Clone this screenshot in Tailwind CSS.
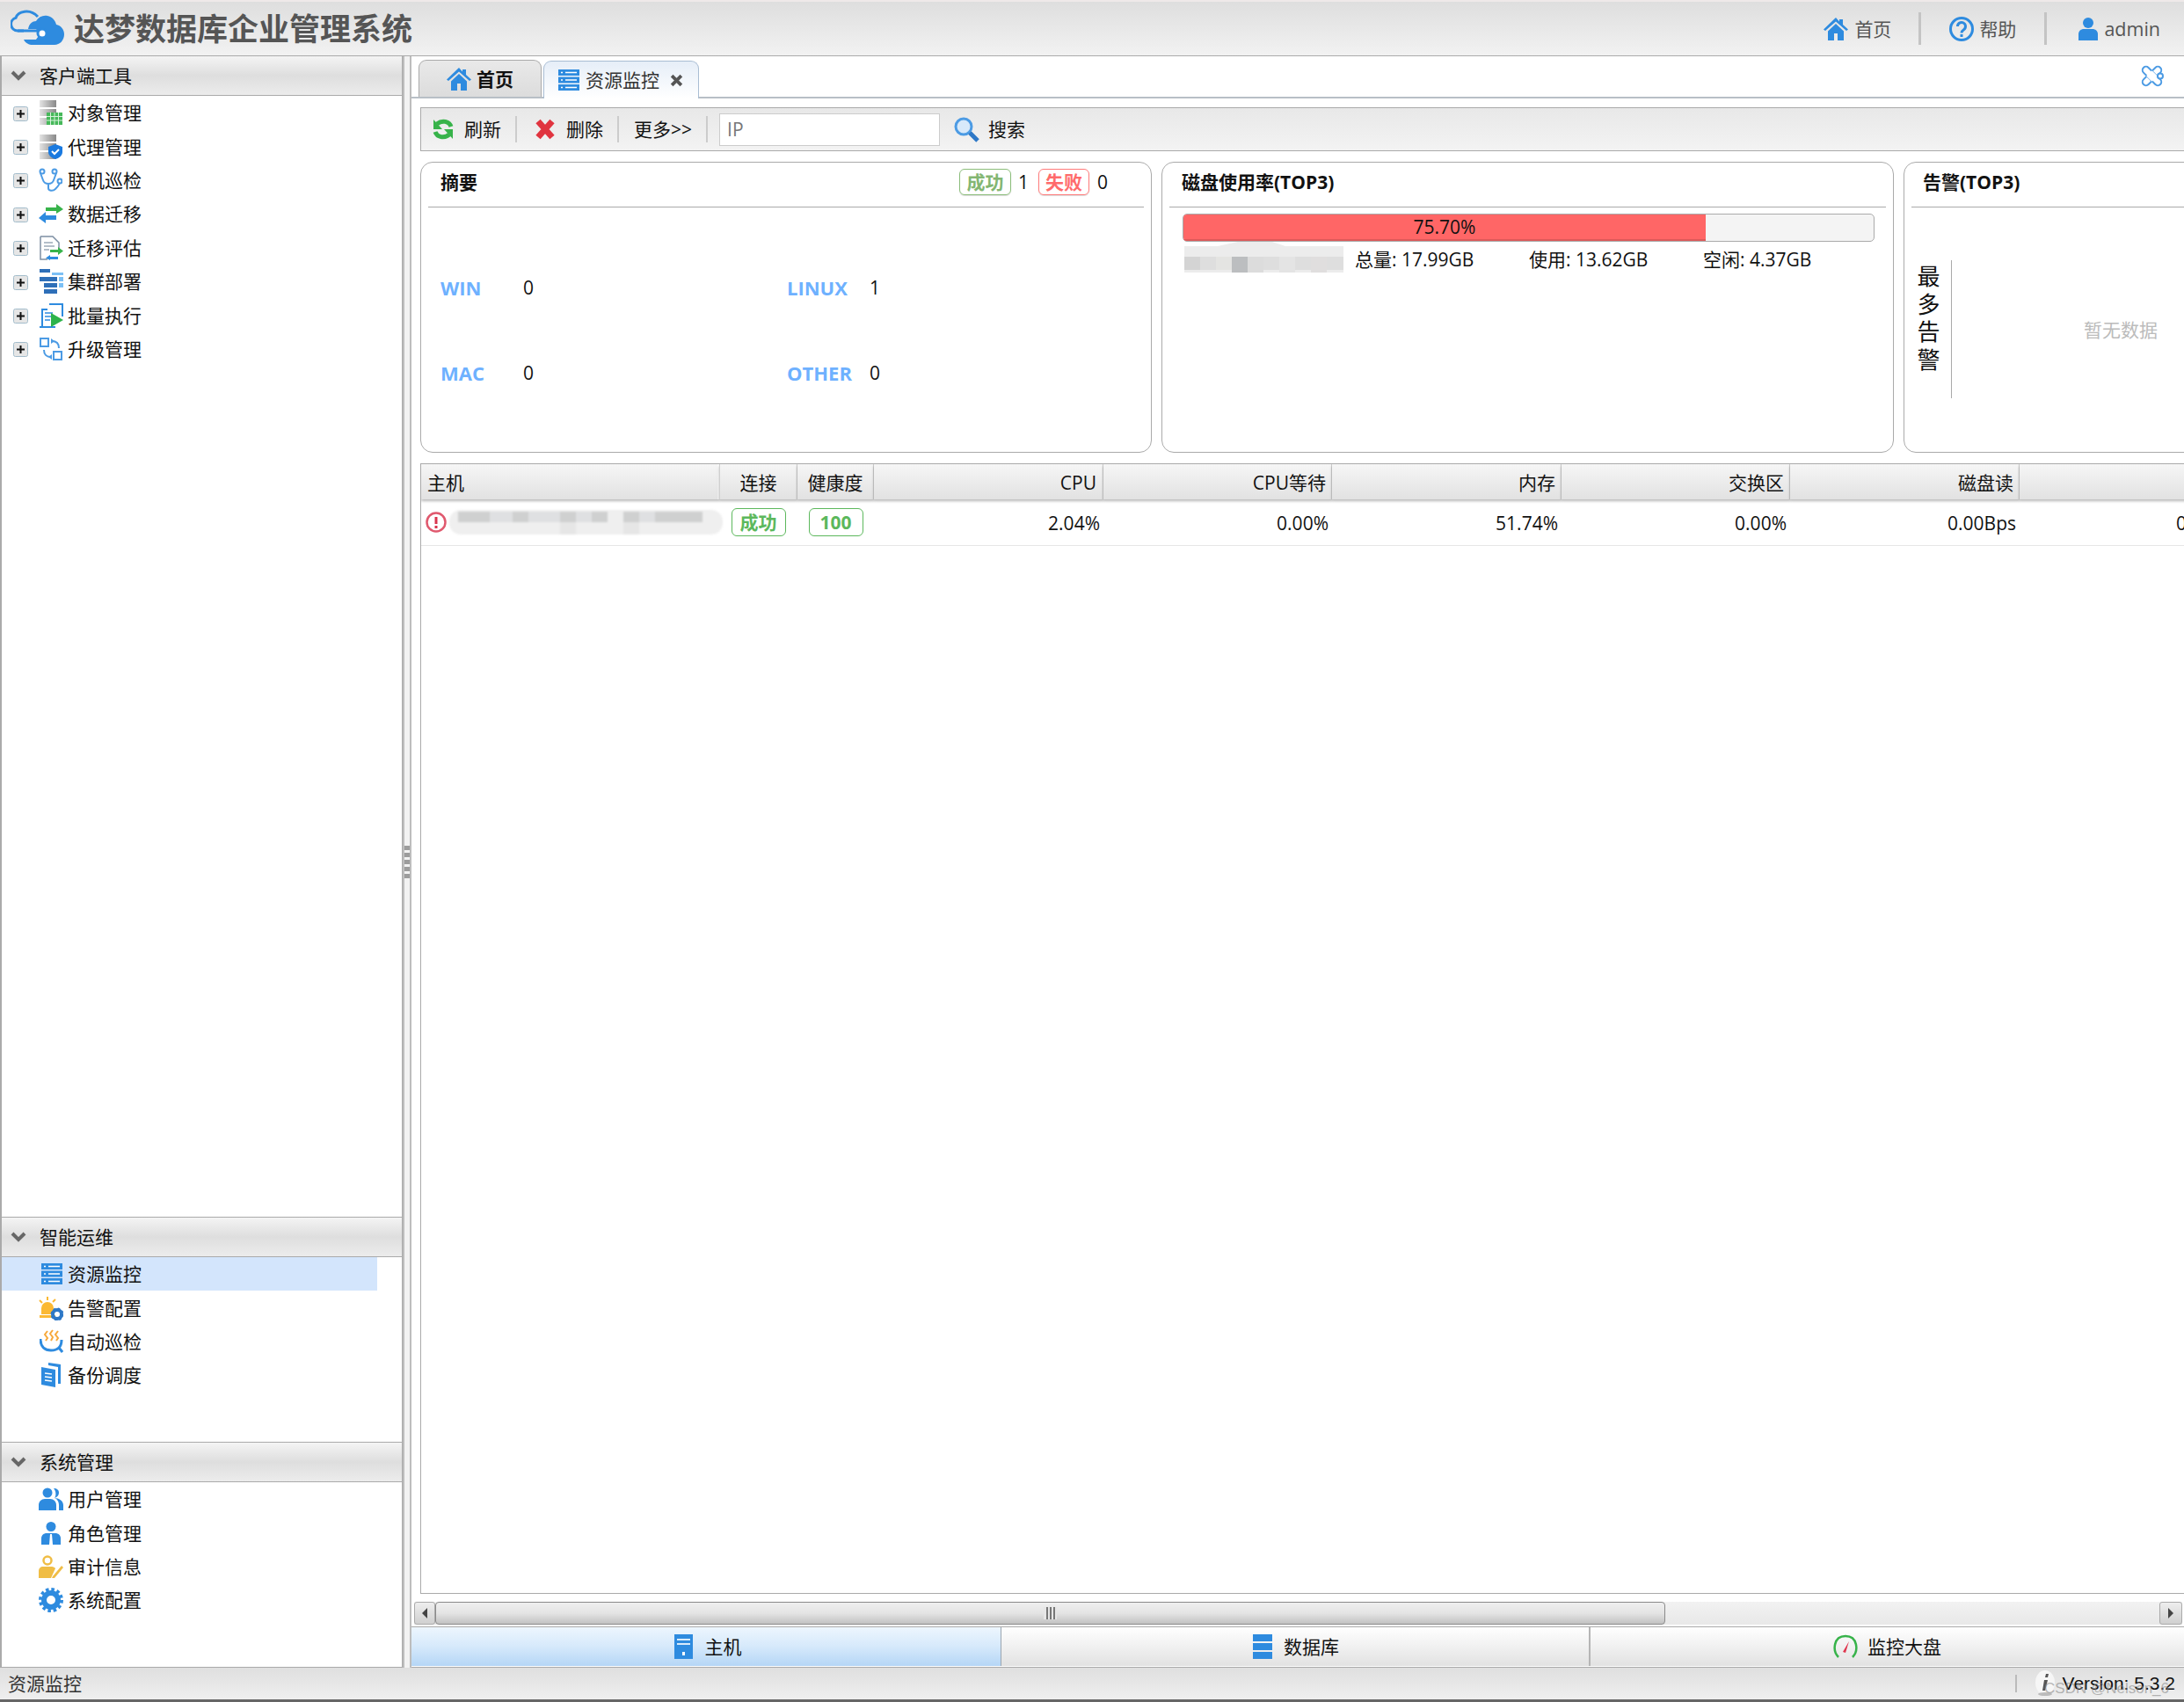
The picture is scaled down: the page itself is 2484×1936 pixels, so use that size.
<!DOCTYPE html>
<html lang="zh-CN">
<head>
    <meta charset="UTF-8">
    <title>达梦数据库企业管理系统</title>
    <script src="https://cdn.jsdelivr.net/npm/@tailwindcss/browser@4"></script>
</head>
<body class="w-[2484px] h-[1936px] overflow-hidden flex flex-col bg-white text-[#111] text-[21px] leading-[28px] font-['Open_Sans','Noto_Sans_CJK_SC',sans-serif]">

    <!-- shared icons -->
    <svg class="absolute w-0 h-0">
        <defs>
            <linearGradient id="stack" x1="0" x2="1" y1="0" y2="0"><stop offset="0" stop-color="#e4e4e4"/><stop offset="1" stop-color="#888"/></linearGradient>
        </defs>
        <symbol id="plus" viewBox="0 0 17 17"><rect x="0.5" y="0.5" width="16" height="16" rx="2" fill="#e6e6e6" stroke="#a3bccb"/><path d="M4 8.500h9M8.500 4v9" stroke="#111" stroke-width="2"/></symbol>
        <symbol id="chevron" viewBox="0 0 18 12"><path d="M2 2l7 7 7-7" fill="none" stroke="#666" stroke-width="4"/></symbol>
        <symbol id="home" viewBox="0 0 28 26"><path d="M14 0L0 13.500l2 1.500L14 4.500 26 15l2-1.500L22 8V2h-4v2.500zM5 15.500V26h7v-8h4v8h7V15.500L14 7z" fill="#2e8bdf"/></symbol>
        <symbol id="rows" viewBox="0 0 24 24"><path d="M0 0h24v7H0zM0 8.500h24v7H0zM0 17h24v7H0z" fill="#2e8bdf"/><path d="M3 3.500h2M8 3.500h13M3 12h2M8 12h13M3 20.500h2M8 20.500h13" stroke="#fff" stroke-width="1.500"/></symbol>
    </svg>

    <!-- Header -->
    <header class="h-[64px] flex-none flex items-center border-b border-[#aaa] border-t-2 border-t-[#efe9e9] bg-linear-to-b from-[#dedede] to-[#f2f2f2] text-[#555]">
        <svg class="ml-[12px] w-[62px] h-[42px] -mt-[2px]" viewBox="12 12 62 42">
            <path d="M27 36h-7a7.500 7.500 0 0 1-2-14.700C20 14 34 10 43 20" fill="none" stroke="#2e8bdf" stroke-width="3"/>
            <path d="M32 34c1-6 5-9 9-9 3-5 8-7 13-6 5 1 9 5 10 10 5 1 9 5 9 11 0 7-5 12-11 12H37c-4 0-8-2-10-6h14a8 8 0 0 0 0-12z" fill="#2e8bdf"/>
            <path d="M20 36h24" stroke="#2e8bdf" stroke-width="3"/>
            <circle cx="48" cy="39" r="5" fill="#fff" stroke="#2e8bdf" stroke-width="3"/>
        </svg>
        <h1 class="ml-[10px] text-[35px] leading-[44px] font-bold tracking-[0px]">达梦数据库企业管理系统</h1>
        <div class="ml-auto flex items-center h-[38px]">
            <svg class="w-[28px] h-[26px]"><use href="#home"/></svg>
            <span class="ml-[7px]">首页</span>
            <div class="w-[3px] h-[37px] bg-[#c4c4c4] ml-[31px]"></div>
            <svg class="w-[28px] h-[28px] ml-[32px]" viewBox="0 0 28 28"><circle cx="14" cy="14" r="12.500" fill="none" stroke="#2e8bdf" stroke-width="3"/><path d="M9.500 11a4.500 4.500 0 1 1 7 3.700c-1.500 1-2.500 1.800-2.500 3.800" fill="none" stroke="#2e8bdf" stroke-width="3"/><rect x="12.500" y="20" width="3" height="3" fill="#2e8bdf"/></svg>
            <span class="ml-[6px]">帮助</span>
            <div class="w-[3px] h-[37px] bg-[#c4c4c4] ml-[32px]"></div>
            <svg class="w-[22px] h-[26px] ml-[36px]" viewBox="0 0 22 26"><circle cx="11" cy="6" r="6" fill="#2e8bdf"/><path d="M0 26v-7c0-4 3-6 6-6h10c3 0 6 2 6 6v7z" fill="#2e8bdf"/></svg>
            <span class="ml-[7px] mr-[27px] text-[21.5px]">admin</span>
        </div>
    </header>

    <div class="flex-1 flex min-h-0">
        <!-- Sidebar -->
        <aside class="w-[458px] flex-none flex flex-col border-l-2 border-r border-b border-[#aaa]">
            <section class="flex-1">
                <div class="h-[45px] flex items-center border-b border-[#aaa] bg-linear-to-b from-[#f4f4f4] via-[#dedede] to-[#ececec]">
                    <svg class="w-[18px] h-[12px] ml-[10px]"><use href="#chevron"/></svg>
                    <span class="ml-[15px]">客户端工具</span>
                </div>
                <div class="h-[38.4px] flex items-center pl-[13px]">
                    <svg class="w-[17px] h-[17px] mt-[2px]"><use href="#plus"/></svg>
                    <svg class="w-[26px] h-[28px] ml-[13px]" viewBox="0 0 26 28"><path d="M0 0h19v8H0zM0 10h19v8H0zM0 20h19v8H0z" fill="url(#stack)"/><rect x="8" y="14" width="18" height="14" fill="#46b85a"/><path d="M8 18.500h18M8 23h18M12.500 14v14M17 14v14M21.500 14v14" stroke="#d6f2da" stroke-width="1"/></svg>
                    <span class="ml-[6px]">对象管理</span>
                </div>
                <div class="h-[38.4px] flex items-center pl-[13px]">
                    <svg class="w-[17px] h-[17px] mt-[2px]"><use href="#plus"/></svg>
                    <svg class="w-[26px] h-[28px] ml-[13px]" viewBox="0 0 26 28"><path d="M0 0h19v8H0zM0 10h19v8H0zM0 20h19v8H0z" fill="url(#stack)"/><path d="M18 11l8 3v6c0 4-4 7-8 8-4-1-8-4-8-8v-6z" fill="#1a7ae0"/><path d="M14 19l3 3 5-5" fill="none" stroke="#fff" stroke-width="2"/></svg>
                    <span class="ml-[6px]">代理管理</span>
                </div>
                <div class="h-[38.4px] flex items-center pl-[13px]">
                    <svg class="w-[17px] h-[17px] mt-[2px]"><use href="#plus"/></svg>
                    <svg class="w-[27px] h-[28px] ml-[12px]" viewBox="0 0 27 28" fill="none" stroke="#4c9be4" stroke-width="2"><circle cx="4" cy="4" r="2.500"/><circle cx="18" cy="4" r="2.500"/><circle cx="24" cy="15" r="2.500"/><path d="M2 6l3 8c1 3 3 4 6 4s5-1 6-4l3-8M11 18v5c0 3 5 4 8 1 2-2 4-4 5-7"/></svg>
                    <span class="ml-[6px]">联机巡检</span>
                </div>
                <div class="h-[38.4px] flex items-center pl-[13px]">
                    <svg class="w-[17px] h-[17px] mt-[2px]"><use href="#plus"/></svg>
                    <svg class="w-[28px] h-[22px] ml-[12px]" viewBox="0 0 28 22"><path d="M8 4h12V0l8 6-8 5V8H8z" fill="#37b34a"/><path d="M20 13H8V9l-8 7 8 6v-4h12z" fill="#2e8bdf"/></svg>
                    <span class="ml-[5px]">数据迁移</span>
                </div>
                <div class="h-[38.4px] flex items-center pl-[13px]">
                    <svg class="w-[17px] h-[17px] mt-[2px]"><use href="#plus"/></svg>
                    <svg class="w-[27px] h-[28px] ml-[13px]" viewBox="0 0 27 28"><path d="M1 1h14l7 7v8M1 1v26h8" fill="none" stroke="#7d8fa3" stroke-width="1.500"/><path d="M5 8h10M5 12h12M5 16h6" stroke="#9aa9b8" stroke-width="1.500"/><path d="M12 16h9v-3l6 4.500-6 4.500v-3h-9z" fill="#37b34a"/><path d="M21 24h-9v-2l-5 3.500 5 2.500v-1h9z" fill="#2e8bdf"/></svg>
                    <span class="ml-[5px]">迁移评估</span>
                </div>
                <div class="h-[38.4px] flex items-center pl-[13px]">
                    <svg class="w-[17px] h-[17px] mt-[2px]"><use href="#plus"/></svg>
                    <svg class="w-[27px] h-[28px] ml-[13px]" viewBox="0 0 27 28"><path d="M0 0h12v4H0zM0 9h20v5H0zM5 16h15v5H5zM5 23h15v5H5z" fill="#2e6fb8"/><path d="M14 4h13v3H14zM22 9h5v5h-5zM22 16h5v5h-5z" fill="#7cc0f5"/></svg>
                    <span class="ml-[5px]">集群部署</span>
                </div>
                <div class="h-[38.4px] flex items-center pl-[13px]">
                    <svg class="w-[17px] h-[17px] mt-[2px]"><use href="#plus"/></svg>
                    <svg class="w-[28px] h-[28px] ml-[12px]" viewBox="0 0 28 28"><path d="M4 27V7h6M12 1h15v14" fill="none" stroke="#2e8bdf" stroke-width="2"/><path d="M1 27h18" stroke="#2e8bdf" stroke-width="2"/><path d="M7 11h9M7 15h7M7 19h6" stroke="#2e8bdf" stroke-width="1.500"/><path d="M14 11l14 8-14 8z" fill="#2db34a"/></svg>
                    <span class="ml-[5px]">批量执行</span>
                </div>
                <div class="h-[38.4px] flex items-center pl-[13px]">
                    <svg class="w-[17px] h-[17px] mt-[2px]"><use href="#plus"/></svg>
                    <svg class="w-[26px] h-[27px] ml-[13px]" viewBox="0 0 26 27" fill="none" stroke="#4c9be4" stroke-width="2"><rect x="1" y="2" width="9" height="9"/><rect x="16" y="17" width="9" height="9"/><path d="M14 5c5 0 8 3 8 8M5 15c0 5 3 8 7 8"/><path d="M17 5l-4-3v6zM10 23l4 3v-6z" fill="#4c9be4" stroke="none"/></svg>
                    <span class="ml-[6px]">升级管理</span>
                </div>
            </section>

            <section class="h-[256px] flex-none">
                <div class="h-[46px] flex items-center border-y border-[#aaa] bg-linear-to-b from-[#f4f4f4] via-[#dedede] to-[#ececec]">
                    <svg class="w-[18px] h-[12px] ml-[10px]"><use href="#chevron"/></svg>
                    <span class="ml-[15px]">智能运维</span>
                </div>
                <div class="h-[38.4px] w-[427px] flex items-center pl-[45px] bg-[#d3e5fc]">
                    <svg class="w-[24px] h-[24px]"><use href="#rows"/></svg>
                    <span class="ml-[6px]">资源监控</span>
                </div>
                <div class="h-[38.4px] flex items-center pl-[42px]">
                    <svg class="w-[28px] h-[28px]" viewBox="0 0 28 28"><path d="M3 21v-7a7 7 0 0 1 14 0v7z" fill="#fbb934"/><path d="M1 22h18v3H1z" fill="#fbb934"/><path d="M1 5l3 3M10 1v4M19 4l-3 3" stroke="#fbb934" stroke-width="2"/><circle cx="21" cy="21" r="5" fill="none" stroke="#2e78c7" stroke-width="4"/><circle cx="21" cy="21" r="6.500" fill="none" stroke="#2e78c7" stroke-width="2" stroke-dasharray="2.500 2.600"/></svg>
                    <span class="ml-[5px]">告警配置</span>
                </div>
                <div class="h-[38.4px] flex items-center pl-[43px]">
                    <svg class="w-[27px] h-[27px]" viewBox="0 0 27 27"><path d="M9 2L6 6l3 4-2 3M15 1l-3 4 3 4-2 4M21 2l-3 4 3 4-2 3" fill="none" stroke="#f7a93b" stroke-width="2"/><path d="M1 11c0 9 5 13 12 13 4 0 7-1 9-3l4 5M25 12c0 3-1 7-3 9" fill="none" stroke="#2e8bdf" stroke-width="3"/></svg>
                    <span class="ml-[5px]">自动巡检</span>
                </div>
                <div class="h-[38.4px] flex items-center pl-[45px]">
                    <svg class="w-[24px] h-[28px]" viewBox="0 0 24 28"><path d="M8 0l14 2v22h-3V5L8 3z" fill="#2e8bdf"/><path d="M0 5l16 3v20L0 25z" fill="#2e8bdf"/><path d="M4 12l8 1M4 16l8 1M4 20l8 1" stroke="#fff" stroke-width="1.500"/></svg>
                    <span class="ml-[6px]">备份调度</span>
                </div>
            </section>

            <section class="h-[256px] flex-none">
                <div class="h-[46px] flex items-center border-y border-[#aaa] bg-linear-to-b from-[#f4f4f4] via-[#dedede] to-[#ececec]">
                    <svg class="w-[18px] h-[12px] ml-[10px]"><use href="#chevron"/></svg>
                    <span class="ml-[15px]">系统管理</span>
                </div>
                <div class="h-[38.4px] flex items-center pl-[42px]">
                    <svg class="w-[28px] h-[26px]" viewBox="0 0 28 26"><circle cx="10" cy="6" r="5.500" fill="#2e8bdf"/><path d="M0 26v-6c0-4 3-7 7-7h6c4 0 7 3 7 7v6z" fill="#2e8bdf"/><path d="M17 1c4 0 6 2 6 5s-2 5-5 6c5 0 10 3 10 8v6h-5v-6c0-4-2-7-5-8 2-2 2-8-1-11z" fill="#2e8bdf"/></svg>
                    <span class="ml-[5px]">用户管理</span>
                </div>
                <div class="h-[38.4px] flex items-center pl-[45px]">
                    <svg class="w-[22px] h-[26px]" viewBox="0 0 22 26"><circle cx="11" cy="5.500" r="5.500" fill="#2e8bdf"/><path d="M0 26v-7c0-4 3-6 6-6h10c3 0 6 2 6 6v7z" fill="#2e8bdf"/><path d="M10 14h2l1 12H9z" fill="#fff"/></svg>
                    <span class="ml-[8px]">角色管理</span>
                </div>
                <div class="h-[38.4px] flex items-center pl-[42px]">
                    <svg class="w-[28px] h-[26px]" viewBox="0 0 28 26"><circle cx="10" cy="6" r="4.500" fill="none" stroke="#f0bd45" stroke-width="2.500"/><path d="M0 26v-8c0-3 2-5 5-5h10c2 0 3 1 4 2l-5 11z" fill="#f0bd45"/><path d="M16 24l10-12 2 2-10 12h-3z" fill="#f0bd45"/></svg>
                    <span class="ml-[5px]">审计信息</span>
                </div>
                <div class="h-[38.4px] flex items-center pl-[42px]">
                    <svg class="w-[28px] h-[28px]" viewBox="0 0 28 28"><circle cx="14" cy="14" r="8" fill="none" stroke="#2e8bdf" stroke-width="6"/><circle cx="14" cy="14" r="12" fill="none" stroke="#2e8bdf" stroke-width="4" stroke-dasharray="3.500 2.780"/></svg>
                    <span class="ml-[5px]">系统配置</span>
                </div>
            </section>
        </aside>

        <!-- Splitter -->
        <div class="w-[10px] flex-none flex flex-col items-center justify-center gap-[3px] border-x-2 border-[#bdbdbd] bg-[#f2f2f2]">
            <div class="w-[6px] h-[5px] bg-[#9c9c9c]"></div>
            <div class="w-[6px] h-[5px] bg-[#9c9c9c]"></div>
            <div class="w-[6px] h-[5px] bg-[#9c9c9c]"></div>
            <div class="w-[6px] h-[5px] bg-[#9c9c9c]"></div>
            <div class="w-[6px] h-[5px] bg-[#9c9c9c]"></div>
        </div>

        <!-- Main -->
        <main class="flex-1 min-w-0 flex flex-col overflow-hidden">
            <!-- Tabs -->
            <div class="h-[48px] flex-none flex items-end pl-[8px] border-b-2 border-[#b8bfc6]">
                <div class="w-[140px] h-[42px] flex items-center pl-[31px] rounded-t-[9px] border border-b-0 border-[#aaa] bg-linear-to-b from-[#e9e9e9] to-[#dcdcdc]">
                    <svg class="w-[28px] h-[26px]"><use href="#home"/></svg>
                    <span class="ml-[6px] font-bold">首页</span>
                </div>
                <div class="w-[177px] h-[43px] -mb-[2px] ml-[2px] flex items-center pl-[16px] rounded-t-[9px] border border-b-0 border-[#a9bdd3] bg-linear-to-b from-[#e6eef8] to-white">
                    <svg class="w-[24px] h-[24px]"><use href="#rows"/></svg>
                    <span class="ml-[7px] text-[#333]">资源监控</span>
                    <svg class="w-[15px] h-[15px] ml-[12px]" viewBox="0 0 14 14"><path d="M2 2l10 10M12 2L2 12" stroke="#555" stroke-width="3.500"/></svg>
                </div>
                <svg class="w-[27px] h-[27px] ml-auto mr-[23px] mb-[10px]" viewBox="0 0 27 27" fill="#fff" stroke="#4c9be4" stroke-width="2"><rect x="9.500" y="0" width="8" height="27" rx="4" transform="rotate(45 13.500 13.500)"/><rect x="9.500" y="0" width="8" height="27" rx="4" transform="rotate(-45 13.500 13.500)"/><rect x="9" y="9" width="9" height="9" stroke="none" transform="rotate(45 13.500 13.500)"/><circle cx="23" cy="13.500" r="3"/></svg>
            </div>

            <!-- Toolbar -->
            <div class="h-[50px] flex-none mt-[10px] ml-[10px] flex items-center border border-r-0 border-[#aaa] bg-linear-to-b from-[#e8e8e8] to-[#f3f3f3]">
                <svg class="w-[24px] h-[26px] ml-[13px]" viewBox="0 0 24 26" fill="none" stroke="#37b34a" stroke-width="5"><path d="M21 10C19 4 11 2 5 7"/><path d="M3 16c2 6 10 8 16 3"/><path d="M1 2v11h10zM23 24V13H13z" fill="#37b34a" stroke="none"/></svg>
                <span class="ml-[12px]">刷新</span>
                <div class="w-[2px] h-[30px] bg-[#ccc] ml-[16px]"></div>
                <svg class="w-[22px] h-[24px] ml-[21px]" viewBox="0 0 22 24"><path d="M3 3l16 18M19 3L3 21" stroke="#e0343f" stroke-width="7"/></svg>
                <span class="ml-[13px]">删除</span>
                <div class="w-[2px] h-[30px] bg-[#ccc] ml-[16px]"></div>
                <span class="ml-[17px]">更多&gt;&gt;</span>
                <div class="w-[2px] h-[30px] bg-[#ccc] ml-[16px]"></div>
                <div class="w-[251px] h-[37px] ml-[13px] flex items-center pl-[8px] border border-[#ccc] bg-white text-[#777]">IP</div>
                <svg class="w-[29px] h-[29px] ml-[16px]" viewBox="0 0 29 29"><circle cx="11" cy="11" r="9" fill="#d7e9fa" stroke="#4c9be4" stroke-width="3"/><path d="M18 18l9 9" stroke="#2e78c7" stroke-width="5"/></svg>
                <span class="ml-[10px]">搜索</span>
            </div>

            <!-- Summary cards -->
            <div class="h-[331px] flex-none mt-[12px] ml-[10px] flex gap-[11px]">
                <div class="w-[832px] flex-none rounded-[14px] border border-[#aaa]">
                    <div class="h-[50px] flex items-center pl-[22px] pr-[49px] pb-[6px] font-bold">
                        <span>摘要</span>
                        <span class="ml-auto h-[30px] w-[59px] flex items-center justify-center rounded-[6px] border border-[#8bbd7a] text-[#83b672] shadow-[0_1px_1px_rgba(0,0,0,.15)]">成功</span>
                        <span class="ml-[8px] w-[23px] font-normal">1</span>
                        <span class="h-[30px] w-[58px] flex items-center justify-center rounded-[6px] border border-[#ff7a7a] text-[#ff6b6b] shadow-[0_1px_1px_rgba(0,0,0,.15)]">失败</span>
                        <span class="ml-[9px] w-[12px] font-normal">0</span>
                    </div>
                    <div class="mx-[8px] h-px bg-[#aaa]"></div>
                    <div class="mt-[71px] pl-[22px] grid grid-cols-[94px_300px_94px_auto] gap-y-[57px] h-[28px] leading-[40px]">
                        <span class="font-bold text-[22px] text-[#6eb1ff]">WIN</span><span>0</span>
                        <span class="font-bold text-[22px] text-[#6eb1ff]">LINUX</span><span>1</span>
                        <span class="font-bold text-[22px] text-[#6eb1ff]">MAC</span><span>0</span>
                        <span class="font-bold text-[22px] text-[#6eb1ff]">OTHER</span><span>0</span>
                    </div>
                </div>
                <div class="w-[833px] flex-none rounded-[14px] border border-[#aaa]">
                    <div class="h-[50px] flex items-center pl-[22px] pb-[6px] font-bold">磁盘使用率(TOP3)</div>
                    <div class="mx-[8px] h-px bg-[#aaa]"></div>
                    <div class="relative mt-[7px] ml-[23px] w-[787px] h-[32px] rounded-[5px] border border-[#aaa] bg-[#f4f4f4] overflow-hidden">
                        <div class="w-[594px] h-full bg-[#ff6666] border-b-2 border-[#dd5a5a] flex items-center justify-center">75.70%</div>
                    </div>
                    <div class="flex items-center h-[37px] -mt-[2px] ml-[25px]">
                        <svg class="w-[181px] h-[37px] flex-none" viewBox="0 0 181 37">
                            <path d="M0 7h38L70 0h24l21 7h66v30H0z" fill="#ececec"/>
                            <path d="M0 19h181v15H0z" fill="#dedede"/>
                            <path d="M0 19h18v15H0z" fill="#d4d4d4"/><path d="M54 19h18v18H54z" fill="#bcbec0"/><path d="M36 19h18v15H36z" fill="#e4e4e2"/><path d="M72 19h18v18H72z" fill="#dcdcdc"/><path d="M108 19h18v18h-18z" fill="#e4e4e4"/><path d="M144 19h18v18h-18z" fill="#e0dede"/>
                        </svg>
                        <span class="ml-[13px] mt-[6px] w-[198px] flex-none">总量: 17.99GB</span>
                        <span class="mt-[6px] w-[198px] flex-none">使用: 13.62GB</span>
                        <span class="mt-[6px] flex-none">空闲: 4.37GB</span>
                    </div>
                </div>
                <div class="w-[833px] flex-none rounded-l-[14px] border border-[#aaa]">
                    <div class="h-[50px] flex items-center pl-[21px] pb-[6px] font-bold">告警(TOP3)</div>
                    <div class="ml-[8px] h-px bg-[#aaa]"></div>
                    <div class="flex mt-[60px]">
                        <div class="ml-[14px] w-[27px] pt-[3px] flex flex-col items-center text-[26px] leading-[31.5px]">
                            <span>最</span><span>多</span><span>告</span><span>警</span>
                        </div>
                        <div class="ml-[12px] h-[157px] pl-[150px] flex items-center border-l border-[#aaa] text-[#bbb]">暂无数据</div>
                    </div>
                </div>
            </div>

            <!-- Host table -->
            <div class="flex-1 min-h-0 mt-[12px] ml-[10px] border border-r-0 border-[#aaa] overflow-hidden">
                <div class="w-[2079px] grid grid-cols-[339px_89px_87px_261px_260px_261px_260px_261px_260px]">
                    <div class="contents">
                        <div class="h-[40px] flex items-center pl-[7px] pt-[2px] border-r-2 border-white/80 shadow-[0_2px_3px_rgba(0,0,0,.28)] bg-linear-to-b from-[#f6f6f6] to-[#e2e2e2]">主机</div>
                        <div class="h-[40px] flex items-center justify-center pt-[2px] border-x border-[#d0d0d0] shadow-[0_2px_3px_rgba(0,0,0,.28)] bg-linear-to-b from-[#f6f6f6] to-[#e2e2e2]">连接</div>
                        <div class="h-[40px] flex items-center justify-center pt-[2px] border-r border-[#d0d0d0] shadow-[0_2px_3px_rgba(0,0,0,.28)] bg-linear-to-b from-[#f6f6f6] to-[#e2e2e2]">健康度</div>
                        <div class="h-[40px] flex items-center justify-end pt-[2px] pr-[7px] border-r border-[#d0d0d0] shadow-[0_2px_3px_rgba(0,0,0,.28)] bg-linear-to-b from-[#f6f6f6] to-[#e2e2e2]">CPU</div>
                        <div class="h-[40px] flex items-center justify-end pt-[2px] pr-[6px] border-r border-[#d0d0d0] shadow-[0_2px_3px_rgba(0,0,0,.28)] bg-linear-to-b from-[#f6f6f6] to-[#e2e2e2]">CPU等待</div>
                        <div class="h-[40px] flex items-center justify-end pt-[2px] pr-[6px] border-r border-[#d0d0d0] shadow-[0_2px_3px_rgba(0,0,0,.28)] bg-linear-to-b from-[#f6f6f6] to-[#e2e2e2]">内存</div>
                        <div class="h-[40px] flex items-center justify-end pt-[2px] pr-[6px] border-r border-[#d0d0d0] shadow-[0_2px_3px_rgba(0,0,0,.28)] bg-linear-to-b from-[#f6f6f6] to-[#e2e2e2]">交换区</div>
                        <div class="h-[40px] flex items-center justify-end pt-[2px] pr-[6px] border-r border-[#d0d0d0] shadow-[0_2px_3px_rgba(0,0,0,.28)] bg-linear-to-b from-[#f6f6f6] to-[#e2e2e2]"><span>磁盘读</span></div>
                        <div class="h-[40px] shadow-[0_2px_3px_rgba(0,0,0,.28)] bg-linear-to-b from-[#f6f6f6] to-[#e2e2e2]"></div>
                    </div>
                    <div class="contents">
                        <div class="h-[53px] flex items-center pl-[5px] border-b border-[#e6e6e6]">
                            <svg class="w-[24px] h-[24px] flex-none" viewBox="0 0 24 24"><circle cx="12" cy="12" r="10.500" fill="#fff" stroke="#e0596e" stroke-width="2.500"/><path d="M12 6v8" stroke="#d8344d" stroke-width="3"/><rect x="10.500" y="16" width="3" height="3" fill="#d8344d"/></svg>
                            <svg class="w-[311px] h-[28px] flex-none ml-[3px] blur-[1px]" viewBox="0 0 311 28">
                                <rect width="311" height="28" rx="13" fill="#efefef"/>
                                <path d="M10 2h36v12H10zM72 2h18v12H72zM126 2h18v12h-18zM162 2h18v12h-18zM198 2h18v12h-18zM234 2h18v12h-18zM252 2h36v12h-36z" fill="#cfd0d0"/>
                                <path d="M46 2h26v12H46zM90 2h36v12H90zM144 2h18v12h-18zM216 2h18v12h-18z" fill="#dfe0e2"/>
                                <path d="M126 14h18v14h-18zM198 14h18v14h-18z" fill="#e6e6e6"/>
                            </svg>
                        </div>
                        <div class="h-[53px] flex items-center justify-center border-b border-[#e6e6e6]"><span class="w-[62px] h-[32px] flex items-center justify-center rounded-[6px] border border-[#5cb85c] font-bold text-[#5cb85c]">成功</span></div>
                        <div class="h-[53px] flex items-center justify-center border-b border-[#e6e6e6]"><span class="w-[62px] h-[32px] flex items-center justify-center rounded-[6px] border border-[#5cb85c] font-bold text-[#5cb85c]">100</span></div>
                        <div class="h-[53px] flex items-center justify-end pt-[2px] pr-[4px] border-b border-[#e6e6e6]">2.04%</div>
                        <div class="h-[53px] flex items-center justify-end pt-[2px] pr-[4px] border-b border-[#e6e6e6]">0.00%</div>
                        <div class="h-[53px] flex items-center justify-end pt-[2px] pr-[4px] border-b border-[#e6e6e6]">51.74%</div>
                        <div class="h-[53px] flex items-center justify-end pt-[2px] pr-[4px] border-b border-[#e6e6e6]">0.00%</div>
                        <div class="h-[53px] flex items-center justify-end pt-[2px] pr-[4px] border-b border-[#e6e6e6]">0.00Bps</div>
                        <div class="h-[53px] flex items-center justify-end pt-[2px] pr-[4px] border-b border-[#e6e6e6]">0.00Bps</div>
                    </div>
                </div>
            </div>

            <!-- Horizontal scrollbar -->
            <div class="h-[26px] flex-none mt-[9px] ml-[3px] mr-[2px] flex bg-linear-to-b from-[#f2f2f2] to-[#e8e8e8]">
                <div class="w-[24px] flex-none flex items-center justify-center rounded-[3px] border border-[#aaa] bg-linear-to-b from-[#eee] to-[#d0d0d0]">
                    <svg class="w-[6px] h-[12px]" viewBox="0 0 6 12"><path d="M6 0v12L0 6z" fill="#444"/></svg>
                </div>
                <div class="w-[1399px] flex-none flex items-center justify-center rounded-[4px] border border-[#8a8a8a] bg-linear-to-b from-[#efefef] via-[#e4e4e4] to-[#c2c2c2]">
                    <div class="w-[15px] h-[14px] flex justify-center gap-[2px] bg-[#e6e6e6]">
                        <div class="w-[2px] h-full bg-[#777]"></div><div class="w-[2px] h-full bg-[#777]"></div><div class="w-[2px] h-full bg-[#777]"></div>
                    </div>
                </div>
                <div class="w-[26px] flex-none ml-auto flex items-center justify-center rounded-[3px] border border-[#aaa] bg-linear-to-b from-[#eee] to-[#d0d0d0]">
                    <svg class="w-[6px] h-[12px]" viewBox="0 0 6 12"><path d="M0 0v12l6-6z" fill="#444"/></svg>
                </div>
            </div>

            <!-- Bottom tabs -->
            <div class="h-[47px] flex-none mt-[2px] flex border-y border-[#aaa] pb-px">
                <div class="w-[671px] flex items-center justify-center pl-[4px] border-r border-[#9aa5b0] bg-linear-to-b from-[#edf6fe] via-[#d6e9fb] to-[#b5d6f6]">
                    <svg class="w-[21px] h-[28px]" viewBox="0 0 21 28"><rect width="21" height="28" fill="#2e8bdf"/><path d="M3 6h15M3 11h15" stroke="#d8ebfb" stroke-width="2"/><rect x="9" y="20" width="3" height="4" fill="#fff"/></svg>
                    <span class="ml-[14px]">主机</span>
                </div>
                <div class="w-[670px] flex items-center justify-center pl-[2px] border-r-2 border-[#b5b5b5] bg-linear-to-b from-white to-[#e2e2e2]">
                    <svg class="w-[22px] h-[28px]" viewBox="0 0 22 28"><path d="M0 0h22v8H0zM0 10h22v8H0zM0 20h22v8H0z" fill="#2e8bdf"/></svg>
                    <span class="ml-[13px]">数据库</span>
                </div>
                <div class="flex-1 flex items-center justify-center bg-linear-to-b from-white to-[#e2e2e2]">
                    <svg class="w-[28px] h-[28px]" viewBox="0 0 28 28"><path d="M6 26C-1 19 0 2 14 2s15 17 8 24" fill="none" stroke="#37b34a" stroke-width="2.500"/><path d="M18 8l-4 13-3-1z" fill="#e0344d"/></svg>
                    <span class="ml-[11px]">监控大盘</span>
                </div>
            </div>
        </main>
    </div>

    <!-- Status bar -->
    <footer class="relative h-[39px] flex-none flex items-center border-b-[3px] border-[#666] bg-linear-to-b from-[#dfdfdf] to-[#efefef]">
        <span class="ml-[9px] text-[#333]">资源监控</span>
        <div class="w-[2px] h-[20px] bg-[#bbb] ml-auto"></div>
        <svg class="w-[24px] h-[30px] ml-[20px]" viewBox="0 0 24 30"><ellipse cx="12" cy="14" rx="11" ry="14" fill="#f6f6f6"/><path d="M11 11h4l-3 12h-3zM13 4h3l-1 4h-3z" fill="#555"/><ellipse cx="12" cy="27" rx="8" ry="2" fill="#bbb"/></svg>
        <span class="ml-[8px] mr-[10px] font-['Liberation_Sans',sans-serif]">Version: 5.3.2</span>
        <span class="absolute right-[17px] top-[14px] text-[17px] leading-[20px] text-[#888]/60 font-['Liberation_Sans',sans-serif]">CSDN @Nelson_6</span>
    </footer>
</body>
</html>
